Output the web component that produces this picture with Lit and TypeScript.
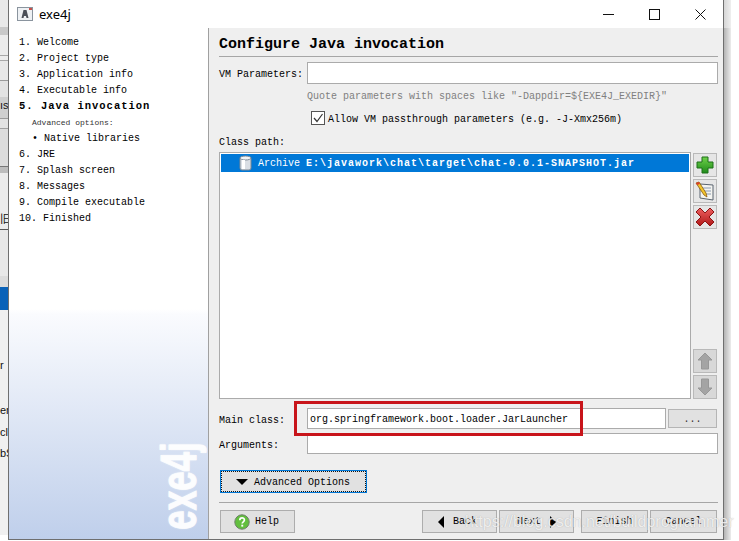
import { LitElement, html, css, svg } from "lit";
import { customElement } from "lit/decorators.js";

const stripSegments: { h: number; bg: string; text?: string }[] = [
  { h: 27, bg: "#e9e9e9" }, { h: 8, bg: "#c9c9c9" }, { h: 20, bg: "#ececec" }, { h: 1, bg: "#a8a8a8" },
  { h: 4, bg: "#ececec" }, { h: 1, bg: "#a8a8a8" }, { h: 19, bg: "#e8e8e8" }, { h: 1, bg: "#9a9a9a" },
  { h: 16, bg: "#e2e2e2" }, { h: 21, bg: "#cfcfcf", text: "ıs" }, { h: 1, bg: "#9a9a9a" }, { h: 9, bg: "#e2e2e2" },
  { h: 1, bg: "#a0a0a0" }, { h: 37, bg: "#dcdcdc" }, { h: 1, bg: "#777" }, { h: 6, bg: "#bdbdbd" },
  { h: 38, bg: "#ececec" }, { h: 18, bg: "#ececec", text: "旧" }, { h: 1, bg: "#555" }, { h: 46, bg: "#e8e8e8" },
  { h: 11, bg: "#dcdcdc" }, { h: 23, bg: "#0a62b8" }, { h: 47, bg: "#f0f0f0" }, { h: 16, bg: "#f0f0f0", text: "r" },
  { h: 29, bg: "#f0f0f0" }, { h: 16, bg: "#f0f0f0", text: "er" }, { h: 6, bg: "#f0f0f0" }, { h: 16, bg: "#f0f0f0", text: "cl" },
  { h: 5, bg: "#f0f0f0" }, { h: 16, bg: "#f0f0f0", text: "bS" }, { h: 74, bg: "#f0f0f0" }, { h: 5, bg: "#fff" },
];

const steps: { t: string; cls?: string }[] = [
  { t: "1. Welcome" }, { t: "2. Project type" }, { t: "3. Application info" }, { t: "4. Executable info" },
  { t: "5. Java invocation", cls: "active" }, { t: "Advanced options:", cls: "adv" }, { t: "• Native libraries", cls: "sub" },
  { t: "6. JRE" }, { t: "7. Splash screen" }, { t: "8. Messages" }, { t: "9. Compile executable" }, { t: "10. Finished" },
];

const plus = svg`<svg width="20" height="20" viewBox="0 0 20 20"><defs><linearGradient id="g" x1="0" y1="0" x2="0" y2="1"><stop offset="0" stop-color="#6fd24a"/><stop offset="1" stop-color="#1f8a1a"/></linearGradient></defs><path d="M7 2h6v5h5v6h-5v5H7v-5H2V7h5z" fill="url(#g)" stroke="#1c6e18"/></svg>`;
const notepad = svg`<svg width="20" height="20" viewBox="0 0 20 20"><path d="M5 3l13 1v15L5 17z" fill="#f4f4f0" stroke="#5a6470"/><path d="M8 7h8M8 10h8M9 13h7" stroke="#8a9ab0"/><path d="M1 2l3-1 7 11 1 4-3-2z" fill="#f2c52c" stroke="#8a5a10" stroke-width=".8"/><path d="M1 2l3-1 1 2-3 1z" fill="#d8402a"/></svg>`;
const cross = svg`<svg width="20" height="20" viewBox="0 0 20 20"><defs><linearGradient id="r" x1="0" y1="0" x2="0" y2="1"><stop offset="0" stop-color="#ee6060"/><stop offset="1" stop-color="#b01818"/></linearGradient></defs><path d="M5 1l5 5 5-5 4 4-5 5 5 5-4 4-5-5-5 5-4-4 5-5-5-5z" fill="url(#r)" stroke="#8c1414"/></svg>`;
const up = svg`<svg width="16" height="18" viewBox="0 0 16 18"><path d="M8 1l7 7h-3.500v9h-7V8H1z" fill="#a4a4a4" stroke="#989898"/></svg>`;
const down = svg`<svg width="16" height="18" viewBox="0 0 16 18"><path d="M8 17l7-7h-3.500V1h-7v9H1z" fill="#a4a4a4" stroke="#989898"/></svg>`;
const help = svg`<svg width="16" height="16" viewBox="0 0 16 16"><circle cx="8" cy="8" r="7.200" fill="#62bf3e" stroke="#6d7f68"/><path d="M5.800 6.200c0-3 4.600-3 4.600-.2 0 1.800-2.200 1.800-2.200 3.600" fill="none" stroke="#fff" stroke-width="1.700"/><rect x="7.300" y="10.700" width="1.900" height="1.900" fill="#fff"/></svg>`;
const jar = svg`<svg width="13" height="16" viewBox="0 0 13 16"><rect x="1" y="2" width="11" height="13" rx="2" fill="#d9dee4" stroke="#7c8894"/><ellipse cx="6.500" cy="3" rx="5.500" ry="2" fill="#f2f4f6" stroke="#7c8894"/><rect x="3" y="5" width="3" height="9" fill="#fff"/></svg>`;
const appIcon = svg`<svg width="16" height="14" viewBox="0 0 16 14"><rect x=".5" y=".5" width="15" height="13" fill="#eef1f4" stroke="#8a949e"/><path d="M6.500 3h3l2 8h-2l-.5-2H7l-.5 2h-2z" fill="#4a4f58"/><rect x="12" y="1" width="3" height="2" fill="#c8504a"/></svg>`;
const minimize = svg`<svg width="11" height="11" viewBox="0 0 11 11"><path d="M0 5.500h11" stroke="#111"/></svg>`;
const maximize = svg`<svg width="11" height="11" viewBox="0 0 11 11"><rect x=".5" y=".5" width="10" height="10" fill="none" stroke="#111"/></svg>`;
const closeIcon = svg`<svg width="11" height="11" viewBox="0 0 11 11"><path d="M.5.500l10 10M10.500.500l-10 10" stroke="#111"/></svg>`;

@customElement("app-root")
export class AppRoot extends LitElement {
  static styles = css`
    :host { display: block; width: 739px; height: 541px; overflow: hidden; background: #fff; }
    * { box-sizing: border-box; }
    .root { position: relative; display: flex; width: 739px; height: 541px; font: 10px/16px "Liberation Mono", monospace; color: #000; white-space: nowrap; }
    .strip { width: 8px; flex: none; overflow: hidden; display: flex; flex-direction: column; }
    .seg { font-size: 11px; line-height: 16px; color: #111; overflow: hidden; font-family: "Liberation Sans", "Noto Sans CJK SC", sans-serif; }
    .window { width: 716px; height: 540px; flex: none; display: flex; flex-direction: column; border: 1px solid #6f6f6f; border-top: 0; background: #fff; }
    .titlebar { height: 28px; flex: none; display: flex; align-items: center; padding: 0 17px 0 8px; background: #fff; }
    .title { margin-left: 6px; font: 13px "Noto Sans", "Liberation Sans", sans-serif; }
    .controls { margin-left: auto; display: flex; gap: 35px; }
    .body { flex: 1; min-height: 0; display: flex; }
    .side { position: relative; width: 200px; flex: none; padding: 7px 0 0 10px; border-right: 1px solid #a0a0a0; background: linear-gradient(#fff 0, #fff 55%, #fafbfe 56%, #bfcfeb 100%); }
    .step { height: 16px; }
    .active { font-weight: bold; letter-spacing: 1px; font-size: 10.500px; line-height: 14px; }
    .adv { font-size: 8px; color: #333; padding-left: 13px; }
    .sub { padding-left: 13px; }
    .logo { position: absolute; left: 170px; top: 415px; width: 0; height: 85px; display: flex; align-items: center; justify-content: center; }
    .logo span { display: block; font: bold 50px/1 "Liberation Sans", sans-serif; color: #fff; opacity: .95; transform: rotate(-90deg) scaleX(.7); -webkit-text-stroke: 1px #fff; text-shadow: 0 0 3px rgba(255,255,255,.7); }
    .main { flex: 1; min-width: 0; background: #efefef; padding: 0 5px 0 10px; display: flex; flex-direction: column; }
    .heading { height: 29px; flex: none; border-bottom: 1px solid #a6a6a6; font-size: 15px; font-weight: bold; line-height: 33px; }
    .row { display: flex; align-items: center; flex: none; }
    .vm { margin-top: 5px; height: 22px; }
    .lbl { width: 88px; flex: none; padding-top: 4px; }
    .field { height: 100%; flex: 1; min-width: 0; background: #fff; border: 1px solid #ababab; padding-left: 2px; line-height: 22px; }
    .hint { height: 22px; line-height: 26px; padding-left: 88px; color: #808080; flex: none; }
    .check { height: 24px; padding-left: 92px; gap: 3px; }
    .check span { padding-top: 4px; }
    .box { width: 14px; height: 14px; border: 1px solid #555; background: #fff; display: flex; }
    .cplabel { height: 22px; line-height: 26px; flex: none; }
    .cp { height: 247px; align-items: stretch; gap: 2px; }
    .list { flex: 1; min-width: 0; background: #fff; border: 1px solid #ababab; padding: 1px; }
    .sel { height: 18px; background: #0078d7; color: #fff; display: flex; align-items: center; padding-left: 18px; gap: 6px; }
    .sel span { padding-top: 2px; }
    .sel b { letter-spacing: 1px; }
    .tools { width: 24px; margin-right: 1px; flex: none; display: flex; flex-direction: column; gap: 2px; padding-top: 1px; }
    .tool { height: 24px; flex: none; background: #e6e6e6; border: 1px solid #b9b9b9; display: flex; align-items: center; justify-content: center; }
    .tool.off { background: #d8d8d8; }
    .spring { flex: 1; }
    .mainclass { margin-top: 9px; height: 21px; }
    .dots { width: 49px; height: 19px; margin: 0 1px 0 2px; flex: none; background: #e1e1e1; border: 1px solid #b5b5b5; text-align: center; line-height: 19px; color: #333; }
    .args { margin-top: 4px; height: 21px; }
    .advbtn { margin: 16px 0 0 1px; width: 147px; height: 23px; flex: none; border: 1px solid #0078d7; padding: 0; background: #e1e1e1; display: flex; }
    .advinner { flex: 1; border: 1px dotted #111; display: flex; align-items: center; padding-left: 14px; gap: 6px; }
    .advinner span:last-child { padding-top: 2px; }
    .tri-d { width: 0; height: 0; border-left: 6px solid transparent; border-right: 6px solid transparent; border-top: 6px solid #000; }
    .rule { margin-top: 9px; height: 1px; flex: none; background: #a6a6a6; }
    .buttons { margin-top: 7px; height: 23px; padding: 0 1px; }
    .btn { height: 23px; flex: none; background: #e1e1e1; border: 1px solid #adadad; display: flex; align-items: center; justify-content: center; line-height: 18px; }
    .help { width: 75px; gap: 5px; padding-right: 2px; }
    .back { width: 75px; margin-left: auto; gap: 9px; padding-right: 4px; }
    .next { width: 75px; margin-left: 2px; gap: 9px; }
    .finish { width: 67px; margin-left: 7px; }
    .cancel { width: 67px; margin-left: 2px; }
    .tri-l { width: 0; height: 0; border-top: 6px solid transparent; border-bottom: 6px solid transparent; border-right: 6px solid #000; }
    .tri-r { width: 0; height: 0; border-top: 6px solid transparent; border-bottom: 6px solid transparent; border-left: 6px solid #000; }
    .shadow { width: 7px; height: 540px; flex: none; display: flex; flex-direction: column; }
    .sh-top { height: 28px; flex: none; background: linear-gradient(90deg, #d6d6d6, #efefef); }
    .sh-rest { flex: 1; background: linear-gradient(90deg, #b4b4b4, #ececec); }
    .redbox { position: absolute; left: 294px; top: 401px; width: 289px; height: 35px; border: 3px solid #c8141a; pointer-events: none; }
    .mark { position: absolute; left: 465px; top: 513px; font: 16px/18px "Liberation Sans", sans-serif; color: rgba(255,255,255,.8); text-shadow: 0 0 1px rgba(110,110,110,.5); pointer-events: none; }
  `;

  render() {
    return html`
      <div class="root">
        <div class="strip">
          ${stripSegments.map((s) => html`<div class="seg" style="height:${s.h}px;background:${s.bg}">${s.text ?? ""}</div>`)}
        </div>
        <div class="window">
          <div class="titlebar">
            ${appIcon}
            <span class="title">exe4j</span>
            <div class="controls">${minimize}${maximize}${closeIcon}</div>
          </div>
          <div class="body">
            <div class="side">
              ${steps.map((s) => html`<div class="step ${s.cls ?? ""}">${s.t}</div>`)}
              <div class="logo"><span>exe4j</span></div>
            </div>
            <div class="main">
              <div class="heading">Configure Java invocation</div>
              <div class="row vm"><span class="lbl">VM Parameters:</span><div class="field"></div></div>
              <div class="hint">Quote parameters with spaces like "-Dappdir=\${EXE4J_EXEDIR}"</div>
              <div class="row check">
                <div class="box"><svg width="12" height="12" viewBox="0 0 12 12"><path d="M2 6l3 3.500L10.500 2" fill="none" stroke="#333" stroke-width="1.200"/></svg></div>
                <span>Allow VM passthrough parameters (e.g. -J-Xmx256m)</span>
              </div>
              <div class="cplabel">Class path:</div>
              <div class="row cp">
                <div class="list">
                  <div class="sel">${jar}<span>Archive <b>E:\\javawork\\chat\\target\\chat-0.0.1-SNAPSHOT.jar</b></span></div>
                </div>
                <div class="tools">
                  <div class="tool">${plus}</div>
                  <div class="tool">${notepad}</div>
                  <div class="tool">${cross}</div>
                  <div class="spring"></div>
                  <div class="tool off">${up}</div>
                  <div class="tool off">${down}</div>
                </div>
              </div>
              <div class="row mainclass">
                <span class="lbl">Main class:</span>
                <div class="field">org.springframework.boot.loader.JarLauncher</div>
                <div class="dots">...</div>
              </div>
              <div class="row args"><span class="lbl">Arguments:</span><div class="field"></div></div>
              <div class="advbtn"><div class="advinner"><span class="tri-d"></span><span>Advanced Options</span></div></div>
              <div class="rule"></div>
              <div class="row buttons">
                <div class="btn help">${help}<span>Help</span></div>
                <div class="btn back"><span class="tri-l"></span><span>Back</span></div>
                <div class="btn next"><span>Next</span><span class="tri-r"></span></div>
                <div class="btn finish">Finish</div>
                <div class="btn cancel">Cancel</div>
              </div>
            </div>
          </div>
        </div>
        <div class="shadow"><div class="sh-top"></div><div class="sh-rest"></div></div>
        <div class="redbox"></div>
        <div class="mark">https://blog.csdn.net/buildprogrammer</div>
      </div>
    `;
  }
}
